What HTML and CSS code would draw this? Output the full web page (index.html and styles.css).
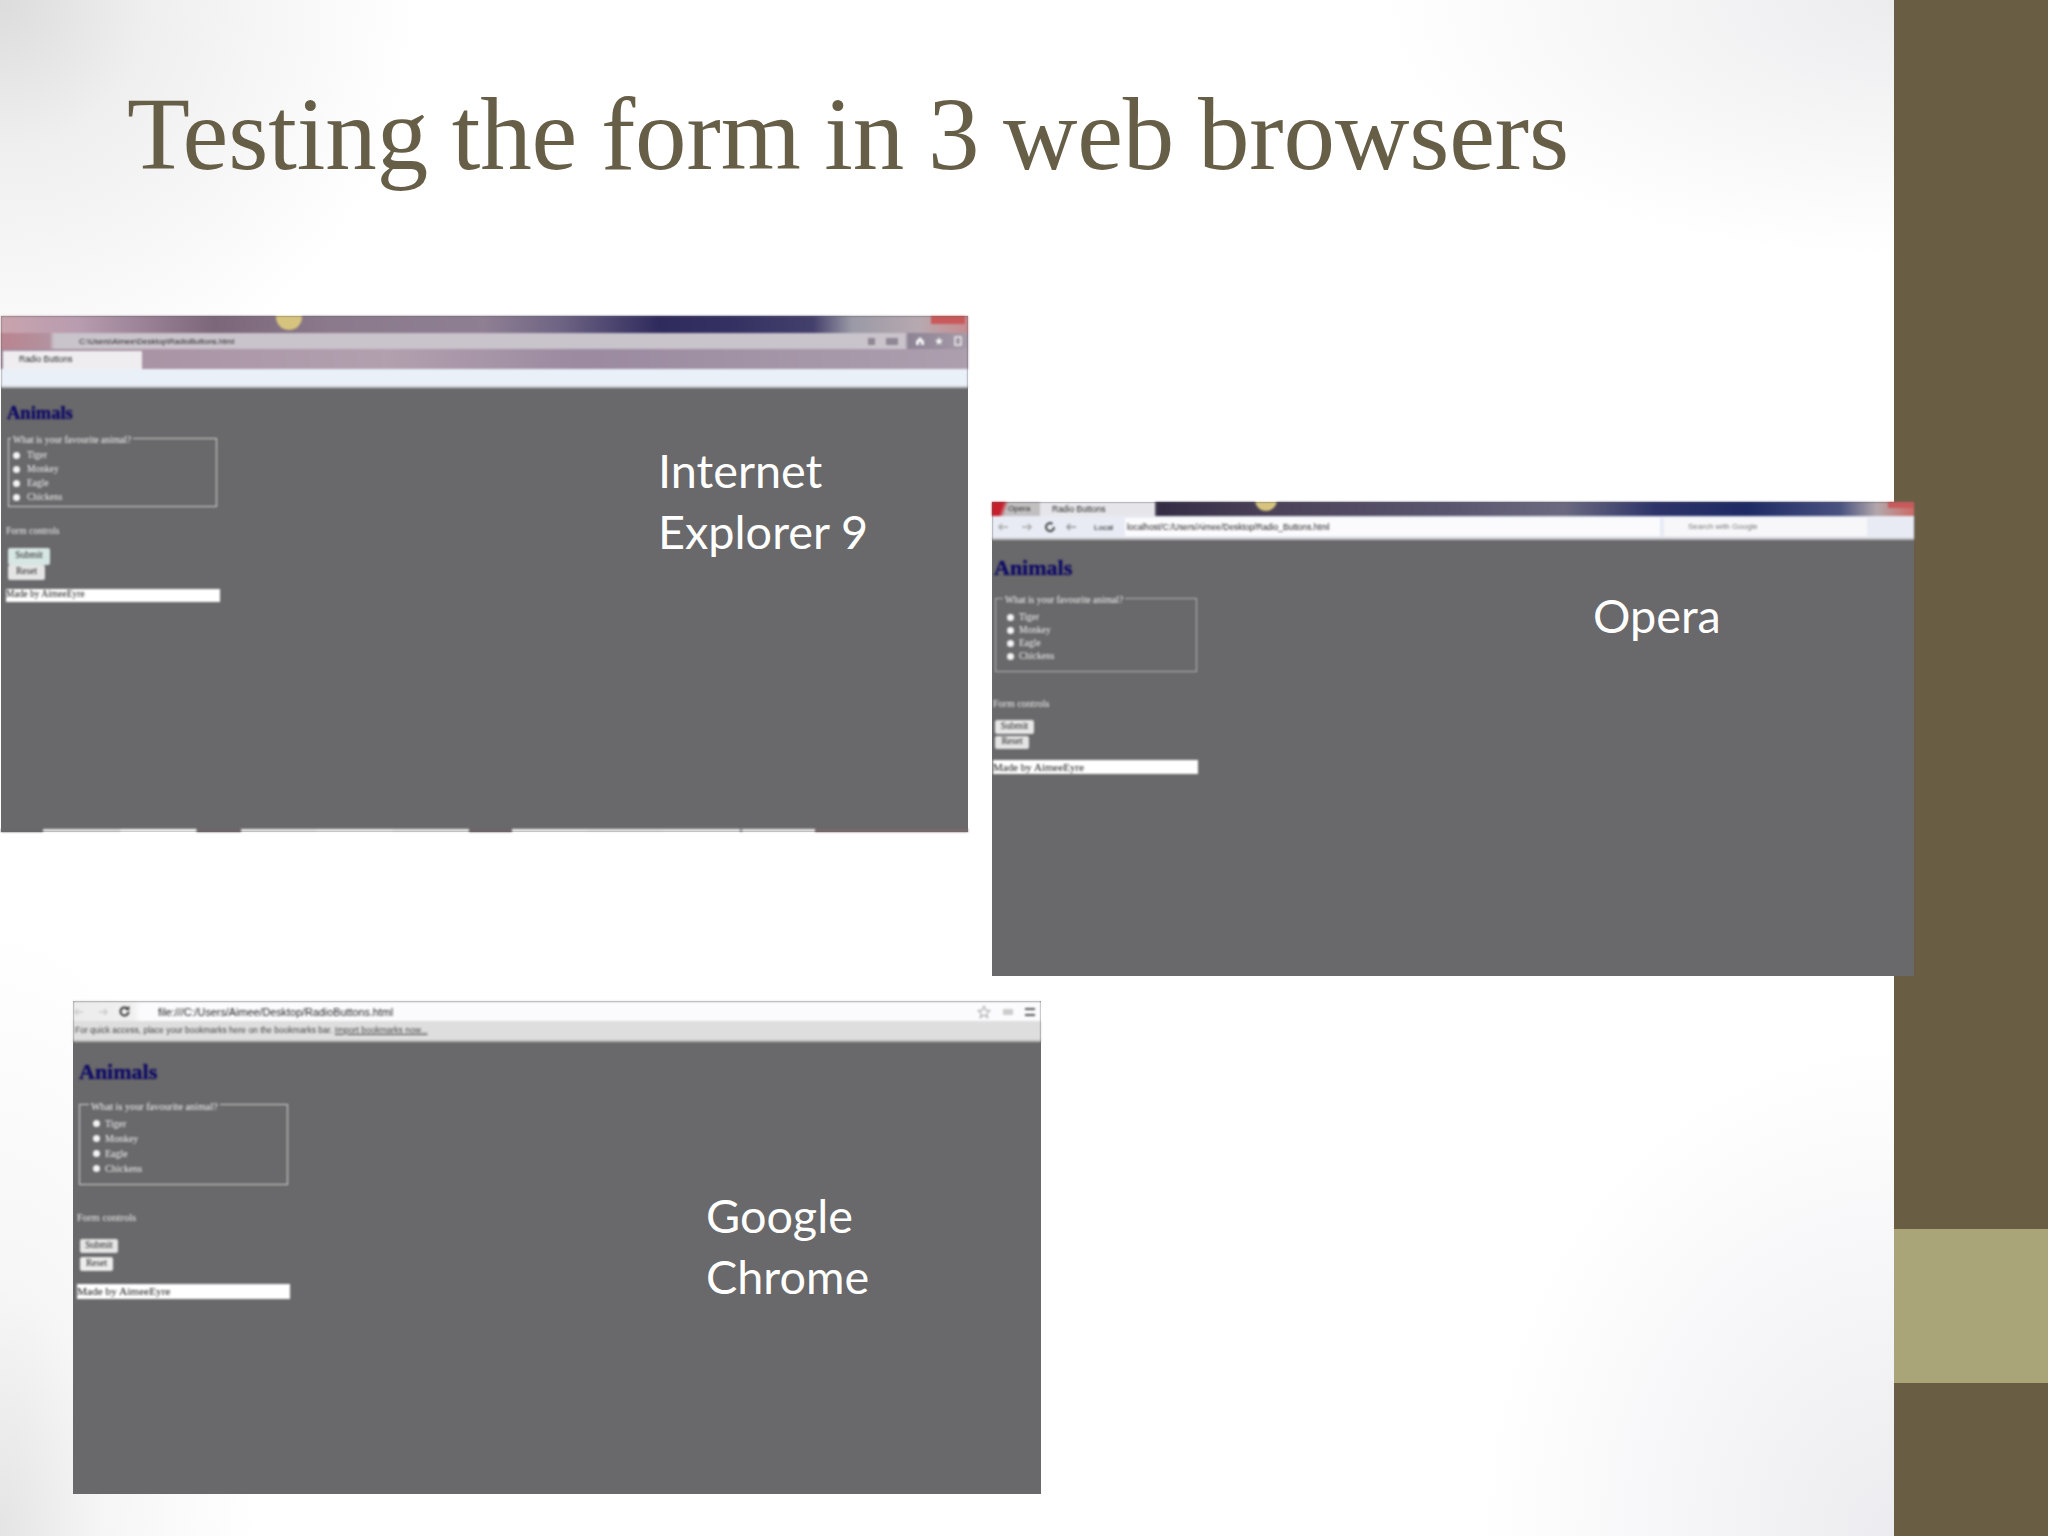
FILE: index.html
```html
<!DOCTYPE html>
<html lang="en">
<head>
<meta charset="utf-8">
<title>Testing the form in 3 web browsers</title>
<link rel="stylesheet" href="styles.css">
</head>
<body>
<main class="slide">
  <aside class="rail"><div class="rail-accent"></div></aside>

  <h1 class="title">Testing the form in 3 web browsers</h1>

  <section class="shot shot-ie">
    <div class="chrome-area">
      <div class="band band-ie"><i class="sun"></i><i class="win-btn"></i></div>
      <div class="ie-addr">
        <span class="url">C:\Users\Aimee\Desktop\RadioButtons.html</span>
        <span class="ie-tools">
          <i class="ie-search"></i>
          <svg class="ie-home" viewBox="0 0 10 10" aria-hidden="true"><path d="M5 1L1 5v4h3V6h2v3h3V5z" fill="#f4f4f4"/></svg>
          <svg class="ie-star" viewBox="0 0 10 10" aria-hidden="true"><path d="M5 1l1.200 2.700 2.800.3-2.100 1.900.6 2.900L5 7.300 2.500 8.800l.6-2.900L1 4l2.800-.3z" fill="#f4f4f4"/></svg>
          <svg class="ie-gear" viewBox="0 0 10 10" aria-hidden="true"><rect x="2" y="1" width="6" height="8" fill="none" stroke="#eee" stroke-width="1.500"/></svg>
        </span>
      </div>
      <div class="ie-tabs"><span class="tab">Radio Buttons</span></div>
      <div class="ie-tool"></div>
    </div>
    <div class="page">
      <h2 class="animals">Animals</h2>
      <fieldset class="box">
        <legend>What is your favourite animal?</legend>
        <div class="opt"><i class="radio"></i>Tiger</div>
        <div class="opt"><i class="radio"></i>Monkey</div>
        <div class="opt"><i class="radio"></i>Eagle</div>
        <div class="opt"><i class="radio"></i>Chickens</div>
      </fieldset>
      <p class="controls">Form controls</p>
      <span class="btn btn-submit">Submit</span>
      <span class="btn btn-reset">Reset</span>
      <div class="made">Made by AimeeEyre</div>
      <div class="ie-edge"></div>
    </div>
    <p class="label label-ie">Internet<br>Explorer 9</p>
  </section>

  <section class="shot shot-opera">
    <div class="chrome-area">
      <div class="band band-opera"><span class="op-btn">Opera</span><span class="op-tab">Radio Buttons</span><i class="sun"></i><i class="win-btn"></i></div>
      <div class="op-tool">
        <svg class="op-nav" viewBox="0 0 90 12" aria-hidden="true">
          <path d="M12 6H3M6 3L3 6l3 3" fill="none" stroke="#aaa" stroke-width="1.500"/>
          <path d="M26 6h9M32 3l3 3-3 3" fill="none" stroke="#aaa" stroke-width="1.500"/>
          <path d="M58 6a4 4 0 1 1-1.500-3" fill="none" stroke="#444" stroke-width="2"/>
          <path d="M80 6h-9M74 3l-3 3 3 3" fill="none" stroke="#999" stroke-width="1.500"/>
        </svg>
        <span class="op-local">Local</span>
        <span class="url op-url">localhost/C:/Users/Aimee/Desktop/Radio_Buttons.html</span>
        <span class="op-search">Search with Google</span>
      </div>
    </div>
    <div class="page">
      <h2 class="animals">Animals</h2>
      <fieldset class="box">
        <legend>What is your favourite animal?</legend>
        <div class="opt"><i class="radio"></i>Tiger</div>
        <div class="opt"><i class="radio"></i>Monkey</div>
        <div class="opt"><i class="radio"></i>Eagle</div>
        <div class="opt"><i class="radio"></i>Chickens</div>
      </fieldset>
      <p class="controls">Form controls</p>
      <span class="btn btn-submit">Submit</span>
      <span class="btn btn-reset">Reset</span>
      <div class="made">Made by AimeeEyre</div>
    </div>
    <p class="label label-opera">Opera</p>
  </section>

  <section class="shot shot-chrome">
    <div class="chrome-area">
      <div class="gc-tool">
        <svg class="gc-nav" viewBox="0 0 40 12" aria-hidden="true">
          <path d="M11 6H3M6 3L3 6l3 3" fill="none" stroke="#ccc" stroke-width="1.500"/>
          <path d="M27 6h8M32 3l3 3-3 3" fill="none" stroke="#ccc" stroke-width="1.500"/>
        </svg>
        <svg class="gc-reload" viewBox="0 0 16 16" aria-hidden="true"><path d="M13 8a5 5 0 1 1-1.600-3.700" fill="none" stroke="#333" stroke-width="2.400"/><path d="M14 1v5H9z" fill="#333"/></svg>
        <span class="url gc-url">file:///C:/Users/Aimee/Desktop/RadioButtons.html</span>
        <svg class="gc-star" viewBox="0 0 16 16" aria-hidden="true"><path d="M8 1.500l2 4.400 4.700.5-3.500 3.200 1 4.600L8 11.400l-4.200 2.800 1-4.600L1.300 6.400l4.700-.5z" fill="none" stroke="#aaa" stroke-width="1.300"/></svg>
        <i class="gc-ext"></i>
        <i class="gc-menu"></i>
      </div>
      <div class="gc-marks">For quick access, place your bookmarks here on the bookmarks bar. <u>Import bookmarks now...</u></div>
    </div>
    <div class="page">
      <h2 class="animals">Animals</h2>
      <fieldset class="box">
        <legend>What is your favourite animal?</legend>
        <div class="opt"><i class="radio"></i>Tiger</div>
        <div class="opt"><i class="radio"></i>Monkey</div>
        <div class="opt"><i class="radio"></i>Eagle</div>
        <div class="opt"><i class="radio"></i>Chickens</div>
      </fieldset>
      <p class="controls">Form controls</p>
      <span class="btn btn-submit">Submit</span>
      <span class="btn btn-reset">Reset</span>
      <div class="made">Made by AimeeEyre</div>
    </div>
    <p class="label label-chrome">Google<br>Chrome</p>
  </section>
</main>
</body>
</html>
```
FILE: styles.css
```css
* { box-sizing: border-box; }
html, body { margin: 0; padding: 0; }
body { width: 2048px; height: 1536px; overflow: hidden; background: #fff; }

.slide {
  position: relative;
  width: 2048px;
  height: 1536px;
  overflow: hidden;
  background:
    radial-gradient(ellipse 420px 420px at 0 0, #dcdcdc 0, rgba(232,232,232,.7) 35%, rgba(255,255,255,0) 100%),
    radial-gradient(ellipse 260px 620px at 0 1536px, #e4e4e4 0, rgba(240,240,240,.6) 40%, rgba(255,255,255,0) 100%),
    radial-gradient(ellipse 520px 260px at 1894px 0, #ececee 0, rgba(255,255,255,0) 100%),
    radial-gradient(ellipse 420px 500px at 1894px 1536px, #ececf0 0, rgba(255,255,255,0) 100%),
    #fff;
}

.title {
  margin: 0;
  position: absolute;
  left: 127px;
  top: 78px;
  font: 400 103px/1.1 "Liberation Serif", serif;
  letter-spacing: -.1px;
  word-spacing: -2px;
  color: #665e47;
  white-space: nowrap;
}

.rail {
  position: absolute;
  left: 1894px; top: 0;
  width: 154px; height: 1536px;
  background: #695d44;
  display: flex;
  flex-direction: column;
  padding-top: 1229px;
}
.rail-accent { height: 154px; background: #aaa579; }

/* screenshots placed on the slide canvas */
.shot { position: absolute; display: flex; flex-direction: column; background: #69686a; }
.shot-ie     { left: 1px;   top: 316px;  width: 967px; height: 516px; }
.shot-opera  { left: 992px; top: 502px;  width: 922px; height: 474px; }
.shot-chrome { left: 73px;  top: 1001px; width: 968px; height: 493px; }

.chrome-area { flex: none; filter: blur(.8px); font-family: "Liberation Sans", sans-serif; color: #222; }
.url { font-size: 8px; white-space: nowrap; color: #222; }

.page {
  flex: 1;
  min-height: 0;
  position: relative;
  font-family: "Liberation Serif", serif;
  color: #fff;
  filter: blur(.8px);
  font-size: 9.500px;
}
.animals { margin: 0; font: 700 18.500px/1 "Liberation Serif", serif; color: #100c66; text-shadow: 0 0 1px #0b0860; }
.box {
  margin: 0;
  padding: 0;
  border: 1.500px solid #d4d4d6;
  min-width: 0;
}
.box legend { padding: 0 2px; line-height: 1; white-space: nowrap; color: #f4f4f4; transform: translateY(2px); }
.opt { display: flex; align-items: center; white-space: nowrap; color: #f0f0f0; }
.radio { flex: none; width: 7px; height: 7px; border-radius: 50%; background: #f4f4f4; }
.controls { margin: 0; line-height: 1; color: #f0f0f0; }
.btn {
  display: table;
  background: #e4e4e4;
  color: #222;
  border-radius: 2px;
  line-height: 1;
  text-align: center;
}
.made { background: #fff; color: #111; white-space: nowrap; line-height: 1; }

.label {
  margin: 0;
  position: absolute;
  font: 400 46.800px/61px Lato, "Open Sans", sans-serif;
  color: #fff;
  white-space: nowrap;
}

.sun { position: absolute; width: 26px; height: 26px; border-radius: 50%; background: #d6c47e; }
.win-btn { position: absolute; height: 12px; width: 34px; background: #c9595a; }

/* IE */
.band { position: relative; overflow: hidden; }
.band-ie {
  height: 17px;
  background: linear-gradient(90deg, #c9a4ad 0, #b89cb0 8%, #7c6679 22%, #8b7a8c 34%, #8f7f93 50%, #6d6383 58%, #2f2b5d 68%, #353263 76%, #44406c 84%, #9a9aa6 88%, #b8a9b0 95%, #c68c90 100%);
}
.band-ie .sun { left: 275px; top: -12px; }
.band-ie .win-btn { right: 3px; top: 0; height: 8px; width: 34px; }
.ie-addr {
  height: 16px;
  padding-left: 78px;
  background: linear-gradient(90deg, #b9848f 0, #b3929f 5%, #c9c3cb 5.500%, #c9c3cb 93.500%, #8c8394 93.800%, #a59aa8 100%);
  display: flex; align-items: center; justify-content: space-between;
}
.ie-tools { display: flex; align-items: center; gap: 9px; padding-right: 5px; }
.ie-search { width: 30px; height: 7px; margin-right: 8px; background: linear-gradient(90deg, #8f8894 0, #8f8894 25%, transparent 25%, transparent 60%, #8f8894 60%); }
.ie-home, .ie-star, .ie-gear { width: 10px; height: 10px; }
.ie-tabs {
  height: 20px;
  background: linear-gradient(90deg, #a48d9f 0, #b2a0af 40%, #9b8aa0 60%, #ad9fae 100%);
  display: flex;
  padding-top: 2px;
}
.tab { width: 139px; margin-left: 2px; background: #efedf0; font-size: 8.500px; padding: 3px 0 0 16px; color: #222; }
.ie-tool { height: 19px; background: #eaf0f8; border-bottom: 2px solid #c4c8cc; }
.shot-ie .page { padding: 16px 0 0 6px; }
.shot-ie .box { width: 209px; height: 73.500px; margin: 11px 0 0 1px; padding: 5px 0 0 4px; }
.shot-ie .box legend { margin-left: -2px; margin-top: -4px; }
.shot-ie .opt { height: 14px; gap: 7px; }
.shot-ie .controls { margin: 20px 0 0 -1px; }
.shot-ie .btn-submit { width: 42px; height: 17px; margin: 11px 0 0 1px; padding-top: 3px; background: #d6e6e2; }
.shot-ie .btn-reset { width: 37px; height: 15px; margin: 0 0 0 1px; padding-top: 2px; }
.shot-ie .made { width: 214px; height: 13px; margin: 9px 0 0 -1px; padding-top: 1px; }
.ie-edge {
  position: absolute;
  left: 0; right: 0; bottom: 0;
  height: 3px;
  background: linear-gradient(90deg,
    #69686a 42px, #e8e8e8 42px, #e8e8e8 119px, #fff 120px, #fff 195px,
    #6f6468 196px, #6f6468 240px, #eee 240px, #eee 315px, #f6f6f6 316px, #f6f6f6 391px, #eee 392px, #eee 468px,
    #6f6468 468px, #6f6468 511px, #f4f4f4 511px, #f4f4f4 586px, #eee 587px, #eee 662px, #f2f2f2 662px, #f2f2f2 739px, #69686a 739px, #eee 742px, #eee 814px,
    #7a6a6c 814px, #7a6a6c 967px);
}
.label-ie { left: 657px; top: 124px; }

/* Opera */
.band-opera {
  height: 14px;
  background: linear-gradient(90deg, #bcb2b8 0, #bcb2b8 17%, #332c45 18%, #4b4258 30%, #5b5670 50%, #6b6a80 62%, #2d3369 72%, #1e2a64 82%, #4a5280 92%, #b3a8ac 96%, #cc6a66 100%);
  display: flex;
  font-size: 8px;
}
.op-btn { width: 48px; background: linear-gradient(110deg, #c6202c 0, #c6202c 22%, #c2bfc1 32%); padding-left: 16px; line-height: 14px; }
.op-tab { width: 115px; background: #e6e6ea; padding-left: 12px; line-height: 14px; font-size: 8.500px; }
.band-opera .sun { left: 263px; top: -13px; width: 22px; height: 22px; }
.band-opera .win-btn { right: 0; top: 0; height: 6px; width: 26px; }
.op-tool {
  height: 24px;
  background: #e8ebf4;
  border-bottom: 2px solid #bdbdc0;
  display: flex;
  align-items: center;
  padding-left: 4px;
}
.op-nav { flex: none; width: 90px; height: 12px; }
.op-local { width: 39px; padding-left: 8px; font-size: 8px; }
.op-url { width: 535px; margin-right: 4px; height: 18px; line-height: 18px; background: #fbfbfd; padding-left: 2px; font-size: 8.400px; }
.op-search { width: 203px; height: 18px; line-height: 18px; background: #f7f7f9; padding-left: 24px; font-size: 8px; color: #777; }
.shot-opera .page { padding: 17px 0 0 2px; }
.shot-opera .animals { font-size: 22px; }
.shot-opera .box { width: 202px; height: 78.500px; margin: 14.500px 0 0 1px; padding: 7.500px 0 0 11px; border-color: #b4b4b6; }
.shot-opera .box legend { margin-left: -4px; margin-top: -3px; }
.shot-opera .opt { height: 13px; gap: 5px; }
.shot-opera .controls { margin: 27px 0 0 -1px; font-size: 10px; }
.shot-opera .btn-submit { width: 39px; height: 14px; margin: 11px 0 0 1px; padding-top: 2px; background: #e6e6e6; }
.shot-opera .btn-reset { width: 34px; height: 13px; margin: 2px 0 0 1px; padding-top: 1px; }
.shot-opera .made { width: 205px; height: 14px; margin: 11px 0 0 -1px; padding-top: 2px; font-size: 11px; }
.label-opera { left: 601px; top: 83px; }

/* Chrome */
.gc-tool {
  height: 20px;
  background: linear-gradient(90deg, #ececec 0, #f0f0f0 60px, #fbfbfd 68px);
  border-top: 1px solid #ddd;
  display: flex;
  align-items: center;
  padding-left: 0;
}
.gc-nav { flex: none; width: 40px; height: 12px; margin-right: 6px; margin-left: -1px; }
.gc-reload { flex: none; width: 13px; height: 13px; margin-left: 0; }
.gc-url { margin-left: 8px; padding-left: 19px; font-size: 10.800px; flex: 1; }
.gc-star { flex: none; width: 14px; height: 14px; margin-right: 12px; }
.gc-ext { flex: none; width: 10px; height: 6px; margin-right: 12px; background: #ccc; }
.gc-menu { flex: none; width: 10px; height: 8px; margin-right: 6px; border-top: 2px solid #555; border-bottom: 2px solid #555; }
.gc-marks { height: 21px; padding: 4px 0 0 2px; background: #dedede; border-bottom: 2px solid #bbb; font-size: 8.500px; line-height: 10px; white-space: nowrap; color: #444; }
.shot-chrome .page { padding: 19px 0 0 6px; }
.shot-chrome .animals { font-size: 22px; }
.shot-chrome .box { width: 209px; height: 85.500px; margin: 16.500px 0 0 0; padding: 6.500px 0 0 13px; }
.shot-chrome .box legend { margin-left: -4px; margin-top: -3px; font-size: 10.200px; }
.shot-chrome .opt { height: 15px; gap: 5px; font-size: 10px; }
.shot-chrome .controls { margin: 28px 0 0 -2px; font-size: 10.500px; }
.shot-chrome .btn-submit { width: 38px; height: 14px; margin: 15px 0 0 1px; padding-top: 2px; }
.shot-chrome .btn-reset { width: 33px; height: 14px; margin: 4px 0 0 1px; padding-top: 2px; background: #ececec; }
.shot-chrome .made { width: 213px; height: 15px; margin: 13px 0 0 -2px; padding-top: 2px; font-size: 11.300px; }
.label-chrome { left: 633px; top: 184px; }
```
